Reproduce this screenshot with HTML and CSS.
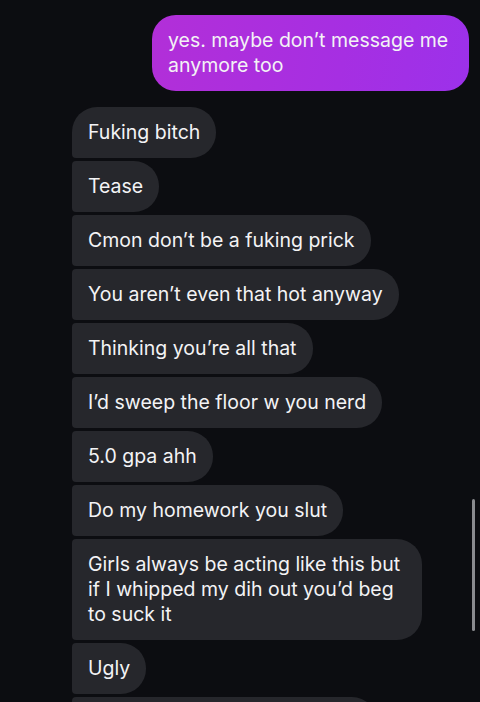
FILE: index.html
```html
<!DOCTYPE html>
<html>
<head>
<meta charset="utf-8">
<link rel="stylesheet" href="styles.css">
</head>
<body>
<div class="chat">
  <div class="row sent"><div class="bubble purple">yes. maybe don’t message me anymore too</div></div>
  <div class="group">
    <div class="bubble gray first">Fuking bitch</div>
    <div class="bubble gray">Tease</div>
    <div class="bubble gray">Cmon don’t be a fuking prick</div>
    <div class="bubble gray">You aren’t even that hot anyway</div>
    <div class="bubble gray">Thinking you’re all that</div>
    <div class="bubble gray">I’d sweep the floor w you nerd</div>
    <div class="bubble gray">5.0 gpa ahh</div>
    <div class="bubble gray">Do my homework you slut</div>
    <div class="bubble gray">Girls always be acting like this but if I whipped my dih out you’d beg to suck it</div>
    <div class="bubble gray">Ugly</div>
    <div class="bubble gray peek"></div>
  </div>
</div>
<div class="scrollbar"></div>
</body>
</html>
```
FILE: styles.css
```css
html, body {
  margin: 0;
  padding: 0;
  background: #0c0d11;
  height: 702px;
  overflow: hidden;
}
body {
  font-family: "Inter", "Roboto", sans-serif;
  font-size: 19.5px;
  color: #f3f3f5;
  position: relative;
}
.chat {
  padding: 15px 11px 0 72px;
  display: flex;
  flex-direction: column;
}
.row.sent {
  display: flex;
  justify-content: flex-end;
}
.bubble {
  padding: 13px 16px;
  line-height: 25px;
  box-sizing: border-box;
}
.purple {
  width: 317px;
  background: linear-gradient(100deg, #b22fd8 0%, #a62fe2 60%, #9c31ea 100%);
  border-radius: 24px;
}
.group {
  margin-top: 16px;
  display: flex;
  flex-direction: column;
  align-items: flex-start;
  gap: 3px;
}
.gray {
  background: #26272c;
  border-radius: 4px 25px 25px 4px;
  max-width: 350px;
}
.gray.first {
  border-top-left-radius: 25px;
}
.gray.peek {
  width: 305px;
  height: 51px;
}
.scrollbar {
  position: absolute;
  left: 472px;
  top: 499px;
  width: 3px;
  height: 132px;
  background: #8a8b8f;
  border-radius: 2px;
}
```
